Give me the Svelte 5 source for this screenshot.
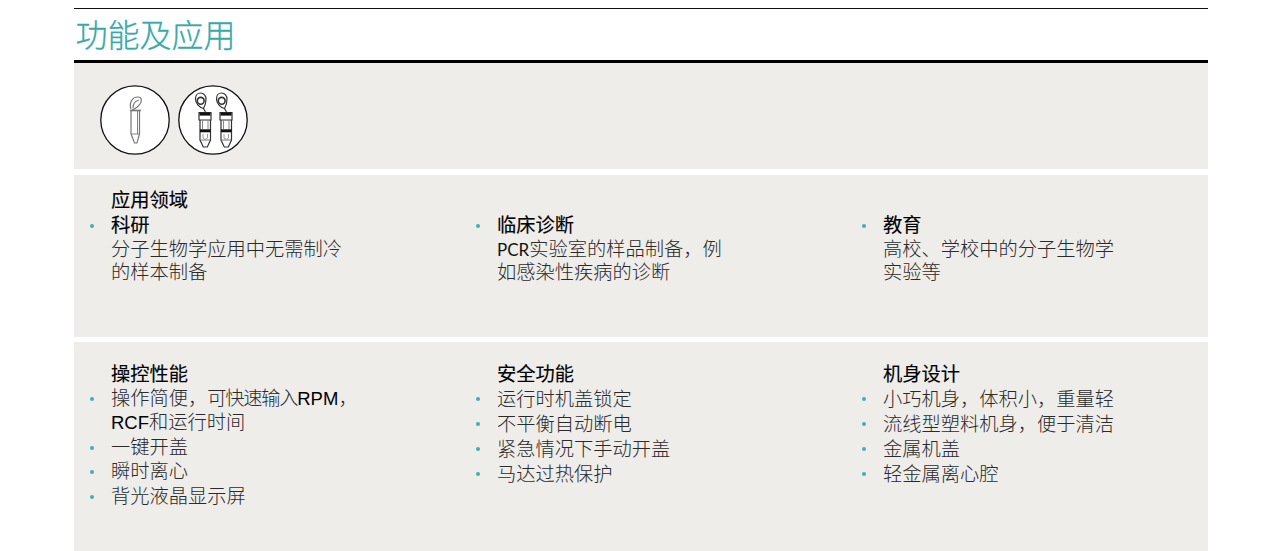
<script>
  const fields = [
    { title: '科研', lines: [[['分子生物学应用中无需制冷']], [['的样本制备']]] },
    { title: '临床诊断', lines: [[['PCR', 'calibri'], ['实验室的样品制备，例']], [['如感染性疾病的诊断']]] },
    { title: '教育', lines: [[['高校、学校中的分子生物学']], [['实验等']]] }
  ];
  const features = [
    {
      title: '操控性能',
      items: [
        [[['操作简便，'], ['可快速输入', 'tight'], ['RPM', 'latin'], ['，']], [['RCF', 'latin'], ['和运行时间']]],
        [[['一键开盖']]],
        [[['瞬时离心']]],
        [[['背光液晶显示屏']]]
      ]
    },
    {
      title: '安全功能',
      items: [[[['运行时机盖锁定']]], [[['不平衡自动断电']]], [[['紧急情况下手动开盖']]], [[['马达过热保护']]]]
    },
    {
      title: '机身设计',
      items: [[[['小巧机身，体积小，重量轻']]], [[['流线型塑料机身，便于清洁']]], [[['金属机盖']]], [[['轻金属离心腔']]]]
    }
  ];
</script>

<main class="page">
  <h1>功能及应用</h1>

  <section class="panel icons">
    <svg class="badge" viewBox="0 0 70 70" width="70" height="70" aria-hidden="true">
      <circle cx="35" cy="35" r="34.2" fill="#fff" stroke="#111" stroke-width="1.3" />
      <g fill="none" stroke="#777" stroke-width="1.2">
        <path d="M31 24 C29 18 32 12 38 12 C42 12 42 16 40 19 C38 22 35 24 32 25" />
        <path d="M33 23 C33 19 35 16 39 15" />
        <path d="M30 25.5 H41" stroke-width="1.6" />
        <path d="M31 26 V49 L34.5 58 H37 L39.5 49 V26" />
        <path d="M31 49 H39.5 M37.5 26 V49" stroke-width="0.9" />
      </g>
    </svg>
    <svg class="badge" viewBox="0 0 70 70" width="70" height="70" aria-hidden="true">
      <circle cx="35" cy="35" r="34.2" fill="#fff" stroke="#111" stroke-width="1.3" />
      {#each [0, 21] as dx}
        <g transform="translate({dx} 0)">
          <g fill="none" stroke="#333" stroke-width="1.2">
            <path d="M17.5 14 C17.5 10 20 8 22.5 8 C26 8 28 11 28 14 C28 18 27 21 25.5 23.5 C21 22.5 17.5 18 17.5 14 Z" />
            <circle cx="22.7" cy="15.8" r="3.4" stroke-width="1.6" />
            <path d="M25.5 23.5 L27.5 27" />
            <path d="M21 27.5 H33 V35 H21 Z" />
            <path d="M22 35 V55 L25.3 62 H29.3 L32.5 55 V35" />
            <path d="M24.5 35 V44 M30 35 V44" stroke="#888" stroke-width="1" />
            <path d="M22.5 55 H32" stroke="#777" stroke-width="1" />
            <path d="M25 49 V53 Q27 56 29.5 53 V49" stroke="#999" stroke-width="1" />
          </g>
          <rect x="21.5" y="27.6" width="11" height="3" fill="#111" />
          <rect x="22" y="44.3" width="10.5" height="3" fill="#111" />
        </g>
      {/each}
    </svg>
  </section>

  <section class="panel fields">
    <h2 class="field-title">应用领域</h2>
    <div class="cols">
      {#each fields as f}
        <div class="col">
          <div class="row"><span class="dot"></span><strong>{f.title}</strong></div>
          {#each f.lines as line}
            <div class="row">{#each line as seg}<span class={seg[1]}>{seg[0]}</span>{/each}</div>
          {/each}
        </div>
      {/each}
    </div>
  </section>

  <section class="panel features">
    <div class="cols">
      {#each features as f}
        <div class="col">
          <div class="row head"><strong>{f.title}</strong></div>
          {#each f.items as item}
            {#each item as line, i}
              <div class="row">
                {#if i === 0}<span class="dot"></span>{/if}{#each line as seg}<span class={seg[1]}>{seg[0]}</span>{/each}
              </div>
            {/each}
          {/each}
        </div>
      {/each}
    </div>
  </section>
</main>

<style>
  :global(body) {
    margin: 0;
    background: #fff;
  }
  .page {
    margin: 8px 58px 0 74px;
    border-top: 1px solid #111;
    font-family: "Liberation Sans", "Noto Sans CJK SC", sans-serif;
    height: 543px;
    overflow: hidden;
    box-sizing: border-box;
  }
  h1 {
    margin: 0;
    height: 54px;
    box-sizing: border-box;
    border-bottom: 3px solid #000;
    padding: 6px 0 0 1.5px;
    font-size: 32px;
    line-height: 42px;
    font-weight: 300;
    color: #36a9ab;
    -webkit-text-stroke: 0.3px #36a9ab;
  }
  .panel {
    background: #eeedea;
  }
  .icons {
    height: 106px;
    box-sizing: border-box;
    padding: 21.5px 0 0 26px;
    display: flex;
    gap: 8px;
  }
  .badge {
    display: block;
  }
  .fields {
    margin-top: 6px;
    height: 162px;
    box-sizing: border-box;
    padding: 13px 0 0 37px;
  }
  .field-title {
    margin: 0;
    font-size: 19.25px;
    line-height: 26px;
    font-weight: 400;
    color: #000;
    -webkit-text-stroke: 0.15px #000;
  }
  .fields .row {
    line-height: 23.5px;
  }
  .features {
    margin-top: 5px;
    height: 209px;
    box-sizing: border-box;
    padding: 21px 0 0 37px;
  }
  .features .col:not(:first-child) .row {
    line-height: 25px;
  }
  .features .col .row.head {
    line-height: 23.5px;
  }
  .cols {
    display: grid;
    grid-template-columns: 386px 386px 1fr;
  }
  .row {
    position: relative;
    font-size: 19.25px;
    line-height: 24.5px;
    font-weight: 300;
    color: #2a2a2a;
    white-space: nowrap;
  }
  .row strong {
    font-weight: 400;
    color: #000;
    -webkit-text-stroke: 0.15px #000;
  }
  .calibri {
    font-family: Lato, sans-serif;
    font-size: 17px;
    font-weight: 400;
    color: #111;
  }
  .latin {
    font-size: 18.5px;
    font-weight: 400;
    color: #000;
  }
  .tight {
    letter-spacing: -1.25px;
  }
  .dot {
    position: absolute;
    left: -21.5px;
    top: 10px;
    width: 4px;
    height: 4px;
    border-radius: 50%;
    background: #3fb0b1;
  }
</style>
